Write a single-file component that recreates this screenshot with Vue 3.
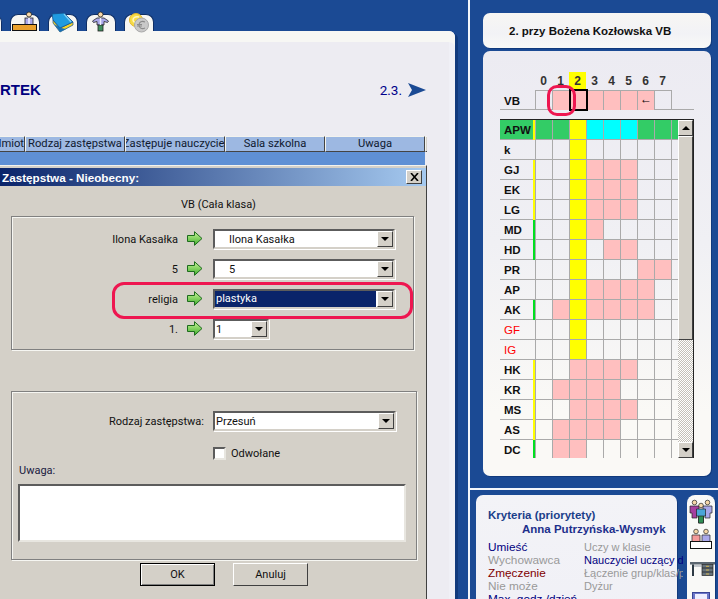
<script setup>
const hours = [0, 1, 2, 3, 4, 5, 6, 7]
const vbCells = ['', 'p', 'p', 'p', 'p', 'p', 'p', '']
const rows = [
  { n: 'APW', m: 'y', top: true, cells: ['g', 'g', 'y', 'c', 'c', 'c', 'g', 'g', 'g'] },
  { n: 'k', pink: [], yellow: true },
  { n: 'GJ', m: 'y', pink: [3, 4, 5], yellow: true },
  { n: 'EK', m: 'y', pink: [3, 4, 5], yellow: true },
  { n: 'LG', m: 'y', pink: [3, 4, 5], yellow: true },
  { n: 'MD', m: 'g', pink: [3], yellow: true },
  { n: 'HD', m: 'g', pink: [4, 5], yellow: true },
  { n: 'PR', pink: [6, 7], yellow: true },
  { n: 'AP', pink: [3, 4, 5, 6], yellow: true },
  { n: 'AK', m: 'g', pink: [1, 3, 4, 5, 6], yellow: true },
  { n: 'GF', red: true, pink: [], yellow: true },
  { n: 'IG', red: true, pink: [], yellow: true },
  { n: 'HK', m: 'y', pink: [2, 3, 4, 5] },
  { n: 'KR', m: 'y', pink: [1, 2, 3, 4] },
  { n: 'MS', m: 'y', pink: [2, 3, 4, 5] },
  { n: 'AS', m: 'y', pink: [1, 2, 3, 4] },
  { n: 'DC', m: 'g', pink: [1, 2] }
].map((r) => ({
  ...r,
  cells: r.cells || Array.from({ length: 9 }, (_, i) =>
    r.pink.includes(i) ? 'p' : (i === 2 && r.yellow ? 'y' : ''))
}))
const colHeads = [
  { t: 'dmiot', c: 'first' },
  { t: 'Rodzaj zastępstwa' },
  { t: 'Zastępuje nauczyciel', c: 'tight' },
  { t: 'Sala szkolna' },
  { t: 'Uwaga' }
]
const criteria = [
  ['Umieść', 'navy', 'Uczy w klasie', 'grey'],
  ['Wychowawca', 'grey', 'Nauczyciel uczący d', 'navy'],
  ['Zmęczenie', 'dark', 'Łączenie grup/klas/p', 'grey'],
  ['Nie może', 'grey', 'Dyżur', 'grey'],
  ['Max. godz./dzień', 'navy', '', 'grey']
]
const pickers = [
  { label: 'Ilona Kasałka', value: 'Ilona Kasałka', cls: 'inset' },
  { label: '5', value: '5', cls: 'inset' },
  { label: 'religia', value: 'plastyka', cls: 'chosen' },
  { label: '1.', value: '1', cls: 'short' }
]
</script>

<template>
  <div class="page">
    <section class="left">
      <nav class="tabs">
        <div class="tab sliver"></div>
        <div class="tab">
          <svg width="30" height="20" viewBox="0 0 30 20">
            <circle cx="19" cy="3.500" r="2.500" fill="#f6d7a8" stroke="#222" stroke-width=".8"/>
            <rect x="15" y="7" width="8" height="8" fill="#a9a8ea" stroke="#222" stroke-width=".8"/>
            <path d="M18 7h2v7h-2z" fill="#dfe0fb"/>
            <rect x="2.500" y="13.500" width="24" height="6" fill="#eaa12c" stroke="#111"/>
          </svg>
        </div>
        <div class="tab">
          <svg width="30" height="22" viewBox="0 0 30 22">
            <path d="M5 9l7 8 13-6v3L12 21 5 12z" fill="#f5d327" stroke="#14508c" stroke-width=".7"/>
            <path d="M4 3L16 2l9 9-13 6-7-8z" fill="#1f9be0" stroke="#14508c" stroke-width=".8"/>
            <path d="M16 3l7 8" stroke="#7fd0f5" stroke-width="1.200" fill="none"/>
            <path d="M6 13l6 8 6-3-5-1z" fill="#176fb6"/>
          </svg>
        </div>
        <div class="tab">
          <svg width="30" height="20" viewBox="0 0 30 20">
            <circle cx="14.500" cy="3.500" r="2.500" fill="#f6d7a8" stroke="#222" stroke-width=".8"/>
            <path d="M11 7h7l4.500 3-1 1.500-3.500-1V14h-7v-3.500l-3.500 1-1-1.500z" fill="#a9a8ea" stroke="#222" stroke-width=".8"/>
            <rect x="12" y="14" width="5" height="6" fill="#3f8f5e" stroke="#222" stroke-width=".8"/>
            <path d="M14.500 7v7" stroke="#eef" stroke-width="1.500"/>
          </svg>
        </div>
        <div class="tab">
          <svg width="30" height="22" viewBox="0 0 30 22">
            <circle cx="12" cy="9" r="6.500" fill="#f6dc45" stroke="#e3b52c"/>
            <path d="M15 6c-4-1-6 1-6 3s3 4 6 3" stroke="#fff7c0" fill="none" stroke-width="1.500"/>
            <circle cx="17.500" cy="14" r="7" fill="#c9c9c9" stroke="#a9a9a9"/>
            <path d="M21 11c-3-1.500-6 0-6 3s3 4.500 6 3M13 13.500h5M13 15h5" stroke="#8b8b8b" fill="none" stroke-width="1.100"/>
          </svg>
        </div>
      </nav>

      <main class="panel">
        <header class="heading">
          <h1 class="day">RTEK</h1>
          <div class="lesson">
            <span>2.3.</span>
            <svg width="18" height="14" viewBox="0 0 18 14"><path d="M0 0l18 7-18 7 4-7z" fill="#1b4a94"/></svg>
          </div>
        </header>

        <div class="table-head">
          <div v-for="h in colHeads" :key="h.t" class="col" :class="h.c">{{ h.t }}</div>
          <div class="col rest"></div>
        </div>
        <div class="table-row"></div>

        <div class="dialog">
          <div class="titlebar">
            <span>Zastępstwa - Nieobecny:</span>
            <button class="close" type="button">
              <svg width="9" height="8" viewBox="0 0 9 8"><path d="M1 0l7 8M8 0L1 8" stroke="#000" stroke-width="1.600" fill="none"/></svg>
            </button>
          </div>
          <div class="subject">VB (Cała klasa)</div>

          <div class="group first-group">
            <div v-for="p in pickers" :key="p.label" class="pick-row">
              <span class="pick-label">{{ p.label }}</span>
              <svg class="go" width="16" height="15" viewBox="0 0 16 15">
                <defs>
                  <linearGradient id="gr" x1="0" y1="0" x2="0" y2="1">
                    <stop offset="0" stop-color="#c9f59a"/><stop offset="1" stop-color="#3fae2a"/>
                  </linearGradient>
                </defs>
                <path d="M.5 4.500h7V.7l7.500 6.800-7.500 6.800v-3.800h-7z" fill="url(#gr)" stroke="#1d6b1d"/>
              </svg>
              <div class="combo" :class="p.cls">
                <span class="combo-text">{{ p.value }}</span>
                <span class="combo-btn"><i></i></span>
              </div>
            </div>
          </div>

          <div class="group second-group">
            <div class="kind-row">
              <label class="kind-label">Rodzaj zastępstwa:</label>
              <div class="combo plain">
                <span class="combo-text">Przesuń</span>
                <span class="combo-btn"><i></i></span>
              </div>
            </div>
            <div class="check-row">
              <span class="check"></span>
              <span>Odwołane</span>
            </div>
            <div class="note-label">Uwaga:</div>
            <div class="textbox"></div>
          </div>

          <div class="actions">
            <button class="btn default" type="button">OK</button>
            <button class="btn" type="button">Anuluj</button>
          </div>
        </div>
      </main>
    </section>

    <div class="vline"></div>

    <aside class="right">
      <div class="upper">
        <div class="card title-card">2. przy Bożena Kozłowska VB</div>
        <div class="card plan-card">
          <div class="hour-row">
            <span v-for="h in hours" :key="h" class="hour" :class="{ now: h === 2 }">{{ h }}</span>
          </div>
          <div class="vb-row">
            <span class="vb-name">VB</span>
            <span v-for="(c, i) in vbCells" :key="i" class="vb-cell" :class="c">{{ i === 6 ? '←' : '' }}</span>
            <span class="vb-cursor"></span>
          </div>
          <div class="board">
            <div class="board-rows">
              <div v-for="r in rows" :key="r.n" class="b-row">
                <div class="b-name" :class="{ red: r.red, top: r.top }">{{ r.n }}<i v-if="r.m" class="mark" :class="r.m"></i></div>
                <div v-for="(c, i) in r.cells" :key="i" class="b-cell" :class="c"></div>
              </div>
            </div>
            <div class="scroll">
              <span class="s-btn"><i class="up"></i></span>
              <span class="s-thumb"></span>
              <span class="s-track"></span>
              <span class="s-btn"><i></i></span>
            </div>
          </div>
          <div class="ring-small"></div>
        </div>
      </div>

      <div class="hline"></div>

      <div class="lower">
        <div class="card criteria">
          <div class="crit-title">Kryteria (priorytety)</div>
          <div class="crit-name">Anna Putrzyńska-Wysmyk</div>
          <div class="crit-list">
            <template v-for="c in criteria" :key="c[0]">
              <span :class="c[1]">{{ c[0] }}</span>
              <span class="second" :class="c[3]">{{ c[2] }}</span>
            </template>
          </div>
        </div>
        <div class="card tools">
          <svg class="t-people" width="24" height="26" viewBox="0 0 24 26">
            <g stroke="#222" stroke-width=".7">
              <circle cx="5.500" cy="3.500" r="2.300" fill="#f6d7a8"/><path d="M1 7h9v7H8v5H3v-5H1z" fill="#a63fa0"/>
              <circle cx="18.500" cy="3.500" r="2.300" fill="#f6d7a8"/><path d="M14 7h9v7h-2v5h-5v-5h-2z" fill="#a9a8ea"/>
              <circle cx="12" cy="6.500" r="2.300" fill="#f6d7a8"/><path d="M7.500 10h9v7h-2v7h-5v-7h-2z" fill="#4aa5d8"/>
              <path d="M9.500 17h5v7h-5z" fill="#2f8f55"/>
            </g>
          </svg>
          <svg class="t-pair" width="24" height="22" viewBox="0 0 24 22">
            <g stroke="#222" stroke-width=".7">
              <circle cx="7" cy="3.500" r="2.300" fill="#f6d7a8"/><path d="M3 7h8v7H3z" fill="#f59a9a"/>
              <circle cx="17" cy="3.500" r="2.300" fill="#f6d7a8"/><path d="M13 7h8v7h-8z" fill="#a9a8ea"/>
            </g>
            <rect x="1.500" y="13.500" width="21" height="7" fill="#fff" stroke="#111"/>
          </svg>
          <svg class="t-desk" width="25" height="14" viewBox="0 0 25 14">
            <rect x="0" y="0" width="25" height="2.500" fill="#5b6670"/>
            <path d="M2 2.500h2V14H2z" fill="#2d3a44"/>
            <rect x="12" y="2.500" width="11" height="11" fill="#66727c" stroke="#222" stroke-width=".7"/>
            <path d="M12 6h11M12 10h11" stroke="#222" stroke-width=".8"/>
            <path d="M16 4.300h3M16 8h3M16 12h3" stroke="#d4b34a" stroke-width="1"/>
            <path d="M4 4h8" stroke="#8b95a0"/>
          </svg>
          <svg class="t-floppy" width="18" height="14" viewBox="0 0 18 14">
            <rect x=".5" y=".5" width="17" height="17" fill="#6b76c8" stroke="#3a4496"/>
            <rect x="3" y="2" width="12" height="8" fill="#eef"/>
          </svg>
        </div>
      </div>
    </aside>

    <div class="ring-big"></div>
  </div>
</template>

<style>
html, body { margin: 0; padding: 0; background: #1b4a94; }
</style>

<style scoped>
.page {
  position: relative;
  display: flex;
  width: 718px;
  height: 599px;
  overflow: hidden;
  background: #1b4a94;
  font-family: Roboto, "Liberation Sans", Arial, sans-serif;
  font-size: 11px;
  color: #111;
}
.left { width: 468px; flex: none; padding-top: 14px; box-sizing: border-box; }
.vline { width: 2px; flex: none; background: #f4f6fa; }
.right { width: 248px; flex: none; display: flex; flex-direction: column; }

/* tabs */
.tabs { display: flex; gap: 8px; height: 17px; margin-left: -20px; }
.tab {
  width: 28px;
  height: 16px;
  flex: none;
  position: relative;
  background: #f6f6f3;
  border: 1px solid #0f2f66;
  border-bottom: 0;
  border-radius: 8px 8px 0 0;
}
.tab svg { position: absolute; left: -1px; top: -4px; overflow: visible; z-index: 2; }
.tab.sliver { width: 20px; }

/* main panel */
.panel {
  position: relative;
  width: 455px;
  height: 568px;
  box-sizing: border-box;
  border-radius: 0 6px 0 0;
  background: linear-gradient(90deg, #edecf2 0 449px, #f0f0f6 449px);
  box-shadow: inset 0 11px 0 #f7f7f4, 3px 2px 0 #113a7c;
  padding-top: 49px;
}
.heading { display: flex; justify-content: space-between; align-items: center; height: 20px; padding-right: 29px; }
.day { margin: 0; font-family: "Liberation Sans", Arial, sans-serif; font-size: 15px; line-height: 20px; font-weight: bold; color: #00007f; }
.lesson { display: flex; align-items: center; gap: 6px; color: #00008b; font-size: 13.500px; }
.table-head { display: flex; height: 16px; margin-top: 36px; width: 427px; }
.col {
  width: 100px;
  box-sizing: border-box;
  flex: none;
  background: #9db8e2;
  border: 1px solid;
  border-color: #f3f3ee #444 #444 #f3f3ee;
  text-align: center;
  font-size: 11.200px;
  line-height: 14px;
  color: #101a30;
  white-space: nowrap;
  overflow: hidden;
}
.col.first { width: 25px; text-align: right; direction: rtl; border-left: 0; }
.col.tight { display: flex; justify-content: center; }
.col.rest { width: 2px; background: #d4d0c8; border-right: 0; }
.table-row { height: 13px; width: 425px; background: #5f90d5; }

/* dialog */
.dialog {
  position: absolute;
  left: 0;
  top: 134px;
  width: 427px;
  height: 440px;
  box-sizing: border-box;
  background: #d4d0c8;
  border-top: 1px solid #f3f3ee;
  border-right: 1px solid #404040;
  padding-top: 2px;
}
.titlebar {
  display: flex;
  align-items: center;
  justify-content: space-between;
  height: 18px;
  padding: 0 4px 0 2px;
  background: linear-gradient(90deg, #0a246a, #a6caf0);
  color: #fff;
  font-family: "Liberation Sans", Arial, sans-serif;
  font-weight: bold;
  font-size: 11.700px;
}
.close {
  width: 16px;
  height: 14px;
  padding: 0;
  display: flex;
  align-items: center;
  justify-content: center;
  background: #d4d0c8;
  border: 1px solid;
  border-color: #fff #404040 #404040 #fff;
}
.subject { height: 30px; line-height: 38px; text-align: center; width: 437px; color: #111; }
.group {
  box-sizing: border-box;
  margin-left: 11px;
  border: 1px solid #808080;
  box-shadow: 1px 1px 0 #f6f6f2, inset 1px 1px 0 #f6f6f2;
}
.first-group {
  width: 403px;
  height: 134px;
  padding-top: 12px;
  display: flex;
  flex-direction: column;
  gap: 10px;
}
.second-group {
  width: 406px;
  height: 169px;
  margin-top: 41px;
  padding-top: 19px;
}
.pick-row { display: flex; align-items: center; height: 20px; }
.pick-label { width: 166px; text-align: right; flex: none; }
.go { margin: -2px 10px 0 9px; flex: none; }
.combo {
  box-sizing: border-box;
  position: relative;
  width: 182px;
  height: 20px;
  background: #fff;
  border: 2px solid;
  border-color: #5c5c5c #d4d0c8 #d4d0c8 #5c5c5c;
  box-shadow: 1px 1px 0 #fff;
  display: flex;
  align-items: center;
  justify-content: space-between;
}
.combo-text { padding-left: 1px; }
.combo.inset .combo-text { padding-left: 14px; }
.combo.short { width: 56px; }
.combo.chosen .combo-text {
  flex: 1;
  height: 16px;
  line-height: 16px;
  background: #0a246a;
  color: #fff;
  margin-right: 1px;
}
.combo.plain { width: 183px; }
.combo-btn {
  width: 16px;
  height: 16px;
  flex: none;
  box-sizing: border-box;
  background: #d4d0c8;
  border: 1px solid;
  border-color: #fff #404040 #404040 #fff;
  display: flex;
  align-items: center;
  justify-content: center;
}
.combo-btn i {
  width: 0;
  height: 0;
  border: 4px solid transparent;
  border-top: 4px solid #000;
  border-bottom: 0;
}
.kind-row { display: flex; align-items: center; }
.kind-label { width: 192px; text-align: right; margin-right: 9px; flex: none; }
.check-row { display: flex; align-items: center; gap: 5px; margin: 16px 0 0 201px; height: 13px; }
.check { width: 9px; height: 9px; background: #fff; border: 2px solid; border-color: #5c5c5c #e8e6e0 #e8e6e0 #5c5c5c; }
.note-label { margin: 4px 0 0 7px; height: 14px; line-height: 14px; color: #1a1a40; }
.textbox {
  box-sizing: border-box;
  width: 388px;
  height: 58px;
  margin: 6px 0 0 6px;
  background: #fff;
  border: 2px solid;
  border-color: #5c5c5c #e8e6e0 #e8e6e0 #5c5c5c;
}
.actions { display: flex; gap: 18px; margin: 3px 0 0 140px; }
.btn {
  box-sizing: border-box;
  width: 75px;
  height: 23px;
  background: #d4d0c8;
  border: 1px solid;
  border-color: #fff #404040 #404040 #fff;
  font: 11px Roboto, "Liberation Sans", Arial, sans-serif;
  color: #111;
  padding: 0;
}
.btn.default { border-color: #000; box-shadow: inset 1px 1px 0 #fff, inset -1px -1px 0 #808080; }

/* right */
.upper { height: 488px; padding: 13px 7px 0 13px; box-sizing: border-box; display: flex; flex-direction: column; gap: 3px; }
.card {
  background: #f8f8f5;
  border-radius: 7px;
  box-shadow: 1px 1px 0 #113a7c;
  font-family: "Liberation Sans", Arial, sans-serif;
}
.title-card {
  height: 35px;
  line-height: 36px;
  padding-left: 26px;
  font-size: 11.500px;
  font-weight: bold;
  background: linear-gradient(#f7f6f3, #f2f2f6 60%, #f9f9f7);
}
.plan-card {
  position: relative;
  height: 425px;
  padding: 21px 0 0 17px;
  box-sizing: border-box;
  background: linear-gradient(180deg, #ecebf2 0, #f0f0f4 45%, #faf9f6 85%);
  width: 228px;
}
.hour-row { display: flex; padding-left: 35px; height: 18px; }
.hour { width: 17px; text-align: center; font-weight: bold; font-size: 12px; line-height: 19px; color: #333; }
.hour.now { background: #ffff00; }
.vb-row {
  position: relative;
  display: flex;
  width: 194px;
  height: 20px;
  box-sizing: border-box;
  border-bottom: 1px solid #aaa;
}
.vb-name { width: 35px; font-weight: bold; font-size: 11.500px; line-height: 22px; padding-left: 4px; box-sizing: border-box; }
.vb-cell {
  box-sizing: border-box;
  width: 17px;
  height: 20px;
  border: 1px solid #aaa;
  border-width: 1px 0 0 1px;
  text-align: center;
  font-size: 12px;
  line-height: 16px;
  color: #000;
}
.vb-cell:nth-last-of-type(2) { width: 18px; border-right: 1px solid #aaa; }
.vb-cell.p { background: #ffbfbf; }
.vb-cursor {
  position: absolute;
  left: 69px;
  top: -1px;
  width: 15px;
  height: 18px;
  border: 2px solid #000;
}
.board {
  display: flex;
  width: 194px;
  height: 339px;
  margin-top: 9px;
  border-top: 1px solid #222;
  border-right: 1px solid #222;
  box-sizing: border-box;
  overflow: hidden;
}
.board-rows { width: 178px; flex: none; }
.b-row { display: flex; height: 20px; box-sizing: border-box; border-bottom: 1px solid #aaa; }
.b-name {
  position: relative;
  width: 35px;
  flex: none;
  box-sizing: border-box;
  padding-left: 4px;
  font-size: 11.500px;
  font-weight: bold;
  line-height: 21px;
  color: #111;
}
.b-name.red { color: #f00; font-weight: normal; }
.b-name.top { background: #33cc66; }
.mark { position: absolute; right: 0; top: 0; width: 2px; height: 20px; }
.mark.y { background: #ffff00; }
.mark.g { background: #00e020; }
.b-cell { width: 16px; flex: none; border-left: 1px solid #aaa; }
.b-cell:last-child { width: 6px; }
.b-cell.p { background: #ffbfbf; }
.b-cell.y { background: #ffff00; }
.b-cell.g { background: #33cc66; }
.b-cell.c { background: #00ffff; }
.scroll {
  width: 15px;
  flex: none;
  display: flex;
  flex-direction: column;
  background: repeating-conic-gradient(#c4c0b8 0 25%, #fff 0 50%) 0 0 / 2px 2px;
}
.s-btn {
  box-sizing: border-box;
  height: 16px;
  flex: none;
  background: #d4d0c8;
  border: 1px solid;
  border-color: #fff #404040 #404040 #fff;
  display: flex;
  align-items: center;
  justify-content: center;
}
.s-btn i { border: 4px solid transparent; border-top: 4px solid #000; border-bottom: 0; }
.s-btn i.up { border-top: 0; border-bottom: 4px solid #000; }
.s-thumb {
  height: 204px;
  flex: none;
  box-sizing: border-box;
  background: #d4d0c8;
  border: 1px solid;
  border-color: #fff #404040 #404040 #fff;
}
.s-track { flex: 1; }
.ring-small {
  position: absolute;
  left: 64px;
  top: 34px;
  width: 29px;
  height: 31px;
  box-sizing: border-box;
  border: 3px solid #ee1650;
  border-radius: 10px;
}
.ring-big {
  position: absolute;
  left: 112px;
  top: 282px;
  width: 301px;
  height: 37px;
  box-sizing: border-box;
  border: 3px solid #ee1650;
  border-radius: 12px;
}
.hline { height: 2px; background: #f4f6fa; flex: none; }
.lower { flex: 1; display: flex; padding: 5px 3px 0 6px; gap: 10px; min-height: 0; }
.criteria {
  width: 201px;
  height: 140px;
  flex: none;
  padding: 13px 0 0 12px;
  box-sizing: border-box;
  background: linear-gradient(180deg, #f3f3f7, #f0f0f6);
}
.crit-title { font-weight: bold; color: #1b3f8a; font-size: 11.500px; line-height: 14px; }
.crit-name { font-weight: bold; color: #1d2f8c; font-size: 11.500px; line-height: 14px; margin: 0 0 0 34px; white-space: nowrap; }
.crit-list { display: grid; grid-template-columns: 96px 99px; margin-top: 5px; line-height: 13px; font-size: 11.800px; white-space: nowrap; }
.crit-list .second { overflow: hidden; font-size: 11px; }
.navy { color: #000080; }
.grey { color: #999; }
.dark { color: #800000; }
.tools {
  width: 28px;
  height: 130px;
  flex: none;
  display: flex;
  flex-direction: column;
  align-items: center;
  padding-top: 4px;
  background: #f9f9f7;
  border-radius: 8px 8px 0 0;
}
.tools svg { flex: none; }
.t-pair { margin-top: 3px; }
.t-desk { margin: 12px 0 0 2px; }
.t-floppy { margin-top: 16px; }
</style>
